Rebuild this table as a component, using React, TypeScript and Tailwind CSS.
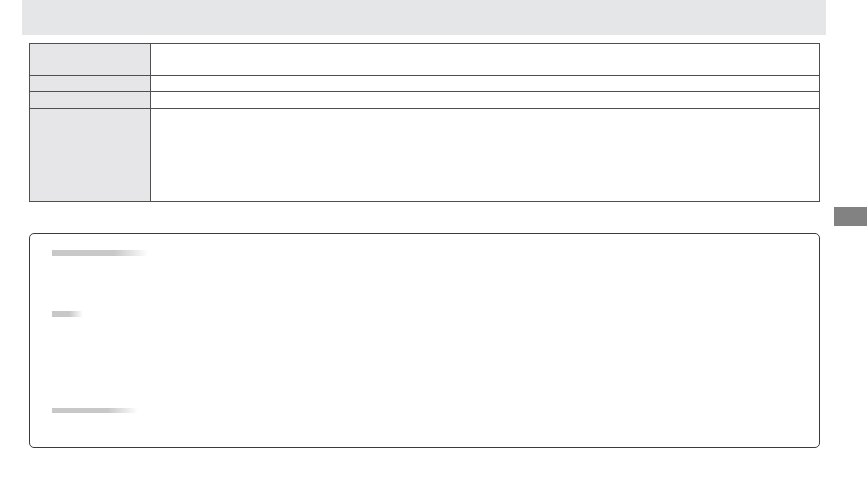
export default function App() {
  return (
    <div className="relative h-[482px] w-[867px] overflow-hidden bg-white">
      {/* Header band */}
      <div className="ml-[22px] h-[35px] w-[804px] bg-[#e5e6e8]" />

      {/* Spec table */}
      <div className="ml-[29px] mt-[8px] grid w-[791px] grid-cols-[121px_1fr] grid-rows-[31px_16px_17px_93px] border border-[#4f4f4f]">
        <div className="border-r border-[#4f4f4f] bg-[#e6e6e8]" />
        <div />
        <div className="border-r border-t border-[#4f4f4f] bg-[#e6e6e8]" />
        <div className="border-t border-[#4f4f4f]" />
        <div className="border-r border-t border-[#4f4f4f] bg-[#e6e6e8]" />
        <div className="border-t border-[#4f4f4f]" />
        <div className="border-r border-t border-[#4f4f4f] bg-[#e6e6e8]" />
        <div className="border-t border-[#4f4f4f]" />
      </div>

      {/* Side tab */}
      <div className="absolute left-[834px] top-[207px] h-[19px] w-[33px] bg-[#828282]" />

      {/* Notes box */}
      <div className="ml-[29px] mt-[31px] flex h-[215px] w-[791px] flex-col rounded-[5px] border border-[#3a3a3a] pl-[22px] pt-[16px]">
        <div className="h-[6px] w-[96px] bg-gradient-to-r from-[#c8c8c8] from-65% to-white" />
        <div className="mt-[55px] h-[6px] w-[31px] bg-gradient-to-r from-[#c8c8c8] from-55% to-white" />
        <div className="mt-[91px] h-[5px] w-[86px] bg-gradient-to-r from-[#c8c8c8] from-65% to-white" />
      </div>
    </div>
  )
}
